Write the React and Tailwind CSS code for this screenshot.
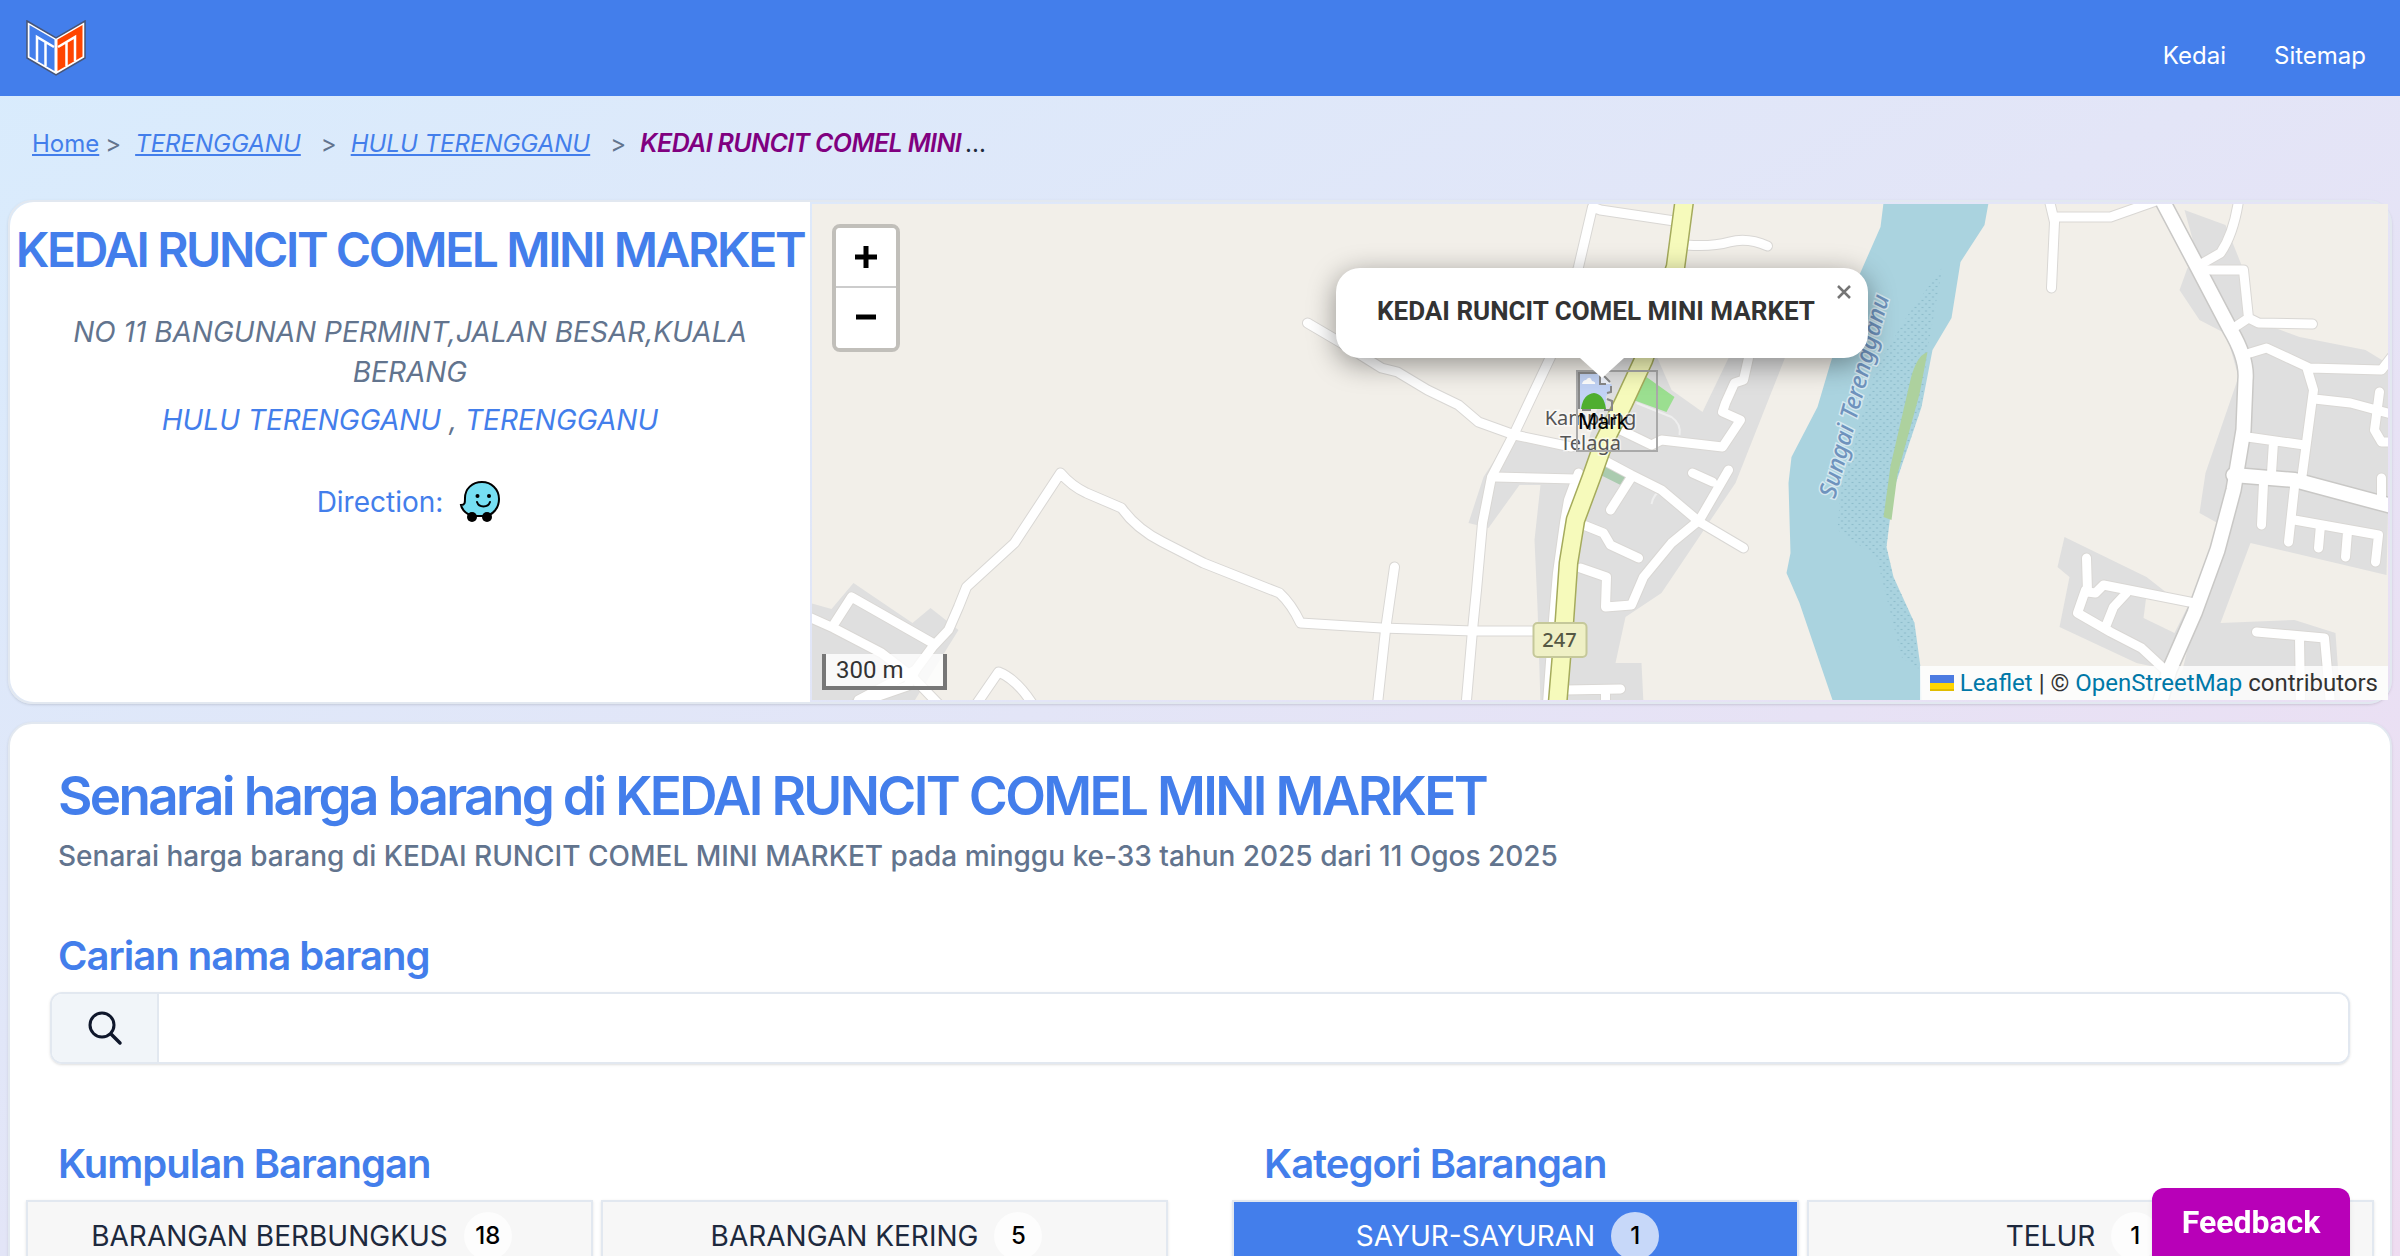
const streets = [
  'M496 119L530 139L570 164L586 168L616 186L647 201L667 218L703 231L760 243',
  'M863 17L789 6L781 3L767 63L739 153L703 229L680 273L671 319L665 386L661 426L655 496',
  'M767 269L757 296L753 319L746 369L742 416L736 500M683 273L764 275',
  'M47 496L104 466L121 443L137 426L147 403L155 383L203 339L249 269Q260 282 275 289L310 304Q325 325 351 338L392 359L468 389Q480 400 489 419L570 424L662 427L750 427',
  'M583 363L574 426L566 500M-5 412L22 424L70 449L101 473L127 500M22 421L40 393L121 439',
  'M165 500L187 468Q205 475 221 500M104 466L96 482L44 500',
  'M875 41Q900 43 918 38T956 42',
  'M937 154L932 176L923 179L914 199L911 208L929 216L911 243L850 236L840 241L809 226',
  'M790 255L820 271L850 286L888 318L932 344M820 273L799 306M917 266L888 316L860 339L832 373L820 401L794 403L795 373L769 364M881 269L901 278',
  'M827 354L799 341L792 329L772 321M754 486L809 485M794 486V500',
  'M1238 -3L1243 18L1240 84M1243 13L1299 13L1350 -5M1427 -3Q1422 30 1409 49L1388 61',
  'M1388 66H1432L1437 114L1419 126M1437 114L1447 119L1501 120',
  'M1432 151L1455 144L1498 164L1570 166L1580 153M1496 166L1502 186L1490 276M1503 195L1539 199L1580 210M1568 188L1563 226L1570 238H1580',
  'M1436 233L1493 241M1462 238L1460 269M1570 274V296M1452 279L1450 321M1483 283L1477 338M1483 316L1567 331L1564 358M1509 321L1507 344M1536 328L1534 353',
  'M1275 354L1276 388L1284 389L1292 381L1383 399M1274 386L1266 409L1299 428L1330 444L1358 470M1315 389L1302 403L1294 423',
  'M1445 428L1513 434L1519 500M1488 433L1489 500',
];

const mainRoads = [
  'M1350 -5L1386 63L1419 126Q1436 155 1434 176L1432 226L1422 286L1406 346L1383 409L1358 466L1348 500',
  'M1422 271L1483 276L1580 302',
];

const highway = 'M873 -5L864 63L832 156L812 199L792 239L780 273L764 316L757 359L753 416L746 500';

const builtUp = [
  'M-5 398L20 405L42 379L101 419L119 404L147 426L101 500H-5Z',
  'M698 233L672 273L657 319L677 324L708 281H729L723 336L726 403L729 500H832L830 459H804L814 413L850 389L924 279L975 150H800L775 245Z',
  'M1373 6L1414 21L1432 66L1437 114L1488 133L1554 146L1580 162L1575 371L1439 339L1409 419L1483 416L1524 429L1529 500H1348L1371 466L1406 319L1388 309L1394 269L1427 173L1415 130L1388 116L1368 86L1376 64L1388 60Z',
  'M1253 333L1246 363L1258 373L1248 423L1325 459L1358 466L1381 409L1335 373Z',
];

const navLinks = ['Kedai', 'Sitemap'];

const groups = [
  {
    title: 'Kumpulan Barangan',
    items: [
      { name: 'BARANGAN BERBUNGKUS', count: 18 },
      { name: 'BARANGAN KERING', count: 5 },
    ],
  },
  {
    title: 'Kategori Barangan',
    items: [
      { name: 'SAYUR-SAYURAN', count: 1, active: true },
      { name: 'TELUR', count: 1 },
    ],
  },
];

function Logo() {
  return (
    <svg viewBox="0 0 60 56" className="h-14 w-15" aria-hidden="true">
      <path d="M1 1L30 18L59 1V38L30 55L1 38Z" fill="#fff" stroke="#475577" strokeWidth="1.5" />
      <path d="M3.5 5L28.5 19.5V51L3.5 36.5Z" fill="#437eeb" />
      <path d="M56.5 5L31.5 19.5V51L56.5 36.5Z" fill="#ff4500" />
      <path
        d="M11 41V17L28 27M19.5 46V22M49 41V17L32 27M40.5 46V22"
        fill="none"
        stroke="#fff"
        strokeWidth="2.5"
      />
    </svg>
  );
}

function WazeIcon() {
  return (
    <svg viewBox="0 0 44 44" className="size-11" aria-hidden="true">
      <path
        d="M23 2C13 2 6 9 6 18c0 5 0 7-4 7 1 5 6 9 11 11h13c8-1 14-8 14-17C40 9 32 2 23 2Z"
        fill="#76dff3"
        stroke="#000"
        strokeWidth="2"
      />
      <circle cx="13" cy="37" r="5" />
      <circle cx="28" cy="37" r="5" />
      <circle cx="18.5" cy="16" r="2" />
      <circle cx="30" cy="16" r="2" />
      <path d="M18 22c2 6 11 6 13 0" fill="none" stroke="#000" strokeWidth="2" strokeLinecap="round" />
    </svg>
  );
}

function SearchIcon() {
  return (
    <svg viewBox="0 0 36 36" className="size-9 text-slate-900" fill="none" stroke="currentColor" strokeLinecap="round" aria-hidden="true">
      <circle cx="15" cy="15" r="12" strokeWidth="3" />
      <path d="M24 24L33 33" strokeWidth="3.5" />
    </svg>
  );
}

function MapTiles() {
  return (
    <svg
      viewBox="0 0 1577 496"
      preserveAspectRatio="xMidYMid slice"
      className="absolute inset-0 size-full"
      aria-hidden="true"
    >
      <defs>
        <pattern id="sand" width="7" height="7" patternUnits="userSpaceOnUse">
          <circle cx="1.5" cy="2" r="0.8" fill="#84b4c4" />
          <circle cx="5" cy="5.5" r="0.8" fill="#84b4c4" />
        </pattern>
      </defs>
      <rect width="1577" height="496" fill="#f2efe9" />
      <g fill="#dfdfdf">
        {builtUp.map((d) => (
          <path key={d} d={d} />
        ))}
      </g>
      <g fill="#f2efe9">
        <path d="M845 152H918L891 208L860 186Z" />
        <path d="M1335 391L1376 403L1363 429L1332 414Z" />
      </g>
      <path d="M835 173L863 193L855 208L822 196Z" fill="#9bdf90" />
      <path d="M795 259L814 273L809 281L789 271Z" fill="#aacbaf" />
      <path
        d="M1072 -1L1069 23L1047 73L1019 159L1006 203L980 253L977 279L979 349L975 369L988 399L1021 496H1110L1109 463L1103 419L1082 373L1075 343L1082 286L1110 203L1121 146L1140 114L1149 58L1173 21L1177 -1Z"
        fill="#aad3df"
      />
      <path
        d="M1131 63L1095 113L1065 163L1029 286L1026 326L1065 353L1090 453L1107 466L1103 419L1082 373L1075 343L1082 286L1110 203L1116 146Z"
        fill="url(#sand)"
      />
      <path d="M1116 148Q1104 152 1098 180L1079 262L1072 313L1080 316L1086 270L1108 190Z" fill="#add19e" />
      <path d="M825 199L860 213Q870 220 868 231M840 300Q842 290 850 286" fill="none" stroke="#eee" strokeWidth="2" />
      <g fill="none" strokeLinejoin="round" strokeLinecap="round">
        {streets.map((d) => (
          <path key={d} d={d} stroke="#d9d7d4" strokeWidth="11" />
        ))}
        {mainRoads.map((d) => (
          <path key={d} d={d} stroke="#c9c8c6" strokeWidth="17" />
        ))}
        {streets.map((d) => (
          <path key={d} d={d} stroke="#fff" strokeWidth="9" />
        ))}
        {mainRoads.map((d) => (
          <path key={d} d={d} stroke="#fff" strokeWidth="14" />
        ))}
        <path d={highway} stroke="#a5ab5c" strokeWidth="20" />
        <path d={highway} stroke="#f6fabb" strokeWidth="17" />
      </g>
      <rect x="722" y="419" width="53" height="34" rx="4" fill="#eff0c5" stroke="#c5c89a" strokeWidth="2" />
      <g className="font-['Noto_Sans']" textAnchor="middle">
        <text x="748" y="443" fontSize="20" fontWeight="500" fill="#555844">247</text>
        <g fontSize="20" fill="#555" stroke="#fff" strokeOpacity=".6" strokeWidth="3" paintOrder="stroke">
          <text x="779" y="221">Kampung</text>
          <text x="779" y="246">Telaga</text>
        </g>
        <text
          transform="translate(1043 192) rotate(-75)"
          y="8"
          fontSize="24"
          fontWeight="500"
          fontStyle="italic"
          fill="#6f93bd"
          stroke="#d5e8f0"
          strokeWidth="3"
          paintOrder="stroke"
        >
          Sungai Terengganu
        </text>
      </g>
    </svg>
  );
}

function BrokenMarker() {
  return (
    <div className="absolute top-[166px] left-[764px] h-[82px] w-[82px] overflow-hidden border-2 border-[#a9a9a9]">
      <svg viewBox="0 0 36 40" className="h-10 w-9" aria-hidden="true">
        <path d="M1 1H22L34 13V18L28 24V37H1Z" fill="#c2d3f5" />
        <path d="M4 12q1-4 4-4q4-5 6 1q4 1 3 3Z" fill="#fff" />
        <path d="M3 37q2-15 13-16q10 1 12 16Z" fill="#4fae30" />
        <path d="M23 1V12H33Z" fill="#eef2fb" />
        <path
          d="M1 37V1H22V12H28M26 4L32 10M33 14V20L29 21M29 27L34 29V38H26M4 38H13"
          fill="none"
          stroke="#888"
          strokeWidth="2"
        />
      </svg>
      <span className="-mt-1 block text-[22px] leading-7 text-black">Mark</span>
    </div>
  );
}

function StoreMap() {
  return (
    <div className="relative m-0.5 flex-1 overflow-hidden bg-[#f2efe9] font-[Roboto]">
      <MapTiles />
      <BrokenMarker />

      <div className="absolute top-5 left-5 flex flex-col rounded-lg border-4 border-black/20 bg-clip-padding">
        <button type="button" aria-label="Zoom in" className="flex h-[60px] w-[60px] items-center justify-center rounded-t border-b-2 border-[#ccc] bg-white">
          <svg viewBox="0 0 22 22" className="size-[22px]"><path d="M11 0V22M0 11H22" stroke="#000" strokeWidth="5" /></svg>
        </button>
        <button type="button" aria-label="Zoom out" className="flex h-[60px] w-[60px] items-center justify-center rounded-b bg-white">
          <svg viewBox="0 0 22 22" className="size-[22px]"><path d="M1 10H21" stroke="#000" strokeWidth="5" /></svg>
        </button>
      </div>

      <div className="absolute top-16 left-[524px] flex h-[90px] w-[532px] items-center justify-center rounded-3xl bg-white pr-3 pb-1 shadow-[0_6px_28px_rgba(0,0,0,0.4)]">
        <b className="text-[26px] leading-9 font-bold whitespace-nowrap text-[#333]">KEDAI RUNCIT COMEL MINI MARKET</b>
        <button type="button" aria-label="Close popup" className="absolute top-4 right-4">
          <svg viewBox="0 0 16 16" className="size-4"><path d="M2 2L14 14M14 2L2 14" stroke="#757575" strokeWidth="2.5" /></svg>
        </button>
        <svg viewBox="0 0 44 20" className="absolute top-full left-1/2 h-5 w-11 -translate-x-1/2"><path d="M0 0H44L22 20Z" fill="#fff" /></svg>
      </div>

      <div className="absolute bottom-2.5 left-2.5 h-9 w-[125px] border-4 border-t-0 border-[#777] bg-white/80 px-2.5 text-2xl leading-8 text-[#333]">
        300 m
      </div>

      <div className="absolute right-0 bottom-0 flex h-[34px] items-center gap-1.5 bg-white/80 px-2.5 text-2xl whitespace-nowrap text-[#333]">
        <svg viewBox="0 0 24 16" className="h-4 w-6" aria-hidden="true">
          <path fill="#4c7be1" d="M0 0H24V8H0Z" />
          <path fill="#ffd500" d="M0 8H24V14H0Z" />
          <path fill="#e0bc00" d="M0 14H24V16H0Z" />
        </svg>
        <a href="#leaflet" className="text-[#0078a8]">Leaflet</a>
        <span>|</span>
        <span>©</span>
        <a href="#osm" className="text-[#0078a8]">OpenStreetMap</a>
        <span>contributors</span>
      </div>
    </div>
  );
}

function CategoryButton({ item }) {
  return (
    <button
      type="button"
      className={`flex h-18 flex-1 items-center justify-center gap-4 border-2 border-slate-200 pr-4 text-[28px] shadow-sm ${
        item.active ? 'bg-[#437eeb] text-white' : 'bg-[#f7f7f7] text-slate-800'
      }`}
    >
      {item.name}
      <span
        className={`flex size-12 items-center justify-center rounded-full text-2xl font-medium text-black ${
          item.active ? 'bg-[#c7d8f9]' : 'bg-white/70'
        }`}
      >
        {item.count}
      </span>
    </button>
  );
}

export default function App() {
  return (
    <div className="h-screen overflow-hidden bg-linear-to-br from-[#d8ecfd] via-[#e3e5f7] to-[#efdcf1] font-[Inter,sans-serif]">
      <header className="flex h-24 items-center justify-between bg-[#437eeb] px-[26px]">
        <a href="#home" aria-label="Laman utama"><Logo /></a>
        <nav className="flex gap-12 pt-4 pr-2 text-2xl text-white">
          {navLinks.map((link) => (
            <a key={link} href={`#${link}`}>{link}</a>
          ))}
        </nav>
      </header>

      <nav aria-label="Breadcrumb" className="flex h-26 items-center px-8 pb-2 text-2xl text-[#437eeb]">
        <a href="#home" className="underline">Home</a>
        <span className="mr-3.5 ml-1.5 text-slate-500">&gt;</span>
        <a href="#state" className="italic underline">TERENGGANU</a>
        <span className="mr-3.5 ml-5 text-slate-500">&gt;</span>
        <a href="#district" className="italic underline">HULU TERENGGANU</a>
        <span className="mr-3.5 ml-5 text-slate-500">&gt;</span>
        <b className="text-[25px] font-semibold tracking-tight text-[#800080] italic">KEDAI RUNCIT COMEL MINI</b>
        <span className="ml-1 text-slate-800">...</span>
      </nav>

      <main className="px-2">
        <section className="flex h-[504px] rounded-3xl border-2 border-slate-200 shadow-sm">
          <div className="flex w-[800px] flex-col items-center rounded-l-3xl bg-white text-center">
            <h1 className="mt-4 text-5xl leading-16 font-semibold tracking-tighter whitespace-nowrap text-[#437eeb]">
              KEDAI RUNCIT COMEL MINI MARKET
            </h1>
            <address className="mt-7.5 px-10 text-[28px] leading-10 font-[450] text-slate-500">
              <p>NO 11 BANGUNAN PERMINT,JALAN BESAR,KUALA BERANG</p>
              <p className="mt-2">
                <a href="#district" className="text-[#437eeb]">HULU TERENGGANU</a> ,{' '}
                <a href="#state" className="text-[#437eeb]">TERENGGANU</a>
              </p>
            </address>
            <a href="#waze" className="mt-10 flex items-center gap-4 text-[28px] text-[#437eeb]">
              Direction: <WazeIcon />
            </a>
          </div>
          <StoreMap />
        </section>

        <section className="mt-4.5 rounded-t-3xl border-2 border-slate-200 bg-white px-4 shadow-sm">
          <div className="px-8 pt-10">
            <h2 className="text-[53px] leading-16 font-semibold tracking-tighter text-[#437eeb]">
              Senarai harga barang di KEDAI RUNCIT COMEL MINI MARKET
            </h2>
            <p className="mt-2 text-[28px] leading-10 font-[450] text-slate-500">
              Senarai harga barang di KEDAI RUNCIT COMEL MINI MARKET pada minggu ke-33 tahun 2025 dari 11 Ogos 2025
            </p>
          </div>

          <div className="mt-14 px-6">
            <label htmlFor="carian" className="block px-2 text-[40px] leading-12 font-semibold tracking-tight text-[#437eeb]">
              Carian nama barang
            </label>
            <div className="mt-3 flex h-18 overflow-hidden rounded-xl border-2 border-slate-200 shadow-sm">
              <button type="button" aria-label="Cari" className="flex w-[107px] items-center justify-center border-r-2 border-slate-200 bg-slate-100">
                <SearchIcon />
              </button>
              <input id="carian" type="text" className="flex-1 bg-white px-4 text-2xl outline-none" />
            </div>
          </div>

          <div className="mt-19 flex gap-16">
            {groups.map((group) => (
              <div key={group.title} className="flex-1">
                <h3 className="px-8 text-[40px] leading-12 font-semibold tracking-tight text-[#437eeb]">{group.title}</h3>
                <div className="mt-3 flex gap-2">
                  {group.items.map((item) => (
                    <CategoryButton key={item.name} item={item} />
                  ))}
                </div>
              </div>
            ))}
          </div>
        </section>
      </main>

      <button type="button" className="fixed right-[50px] bottom-0 h-17 w-[198px] rounded-t-xl bg-[#b800b8] font-[Roboto] text-[32px] font-bold text-white shadow-md">
        Feedback
      </button>
    </div>
  );
}
